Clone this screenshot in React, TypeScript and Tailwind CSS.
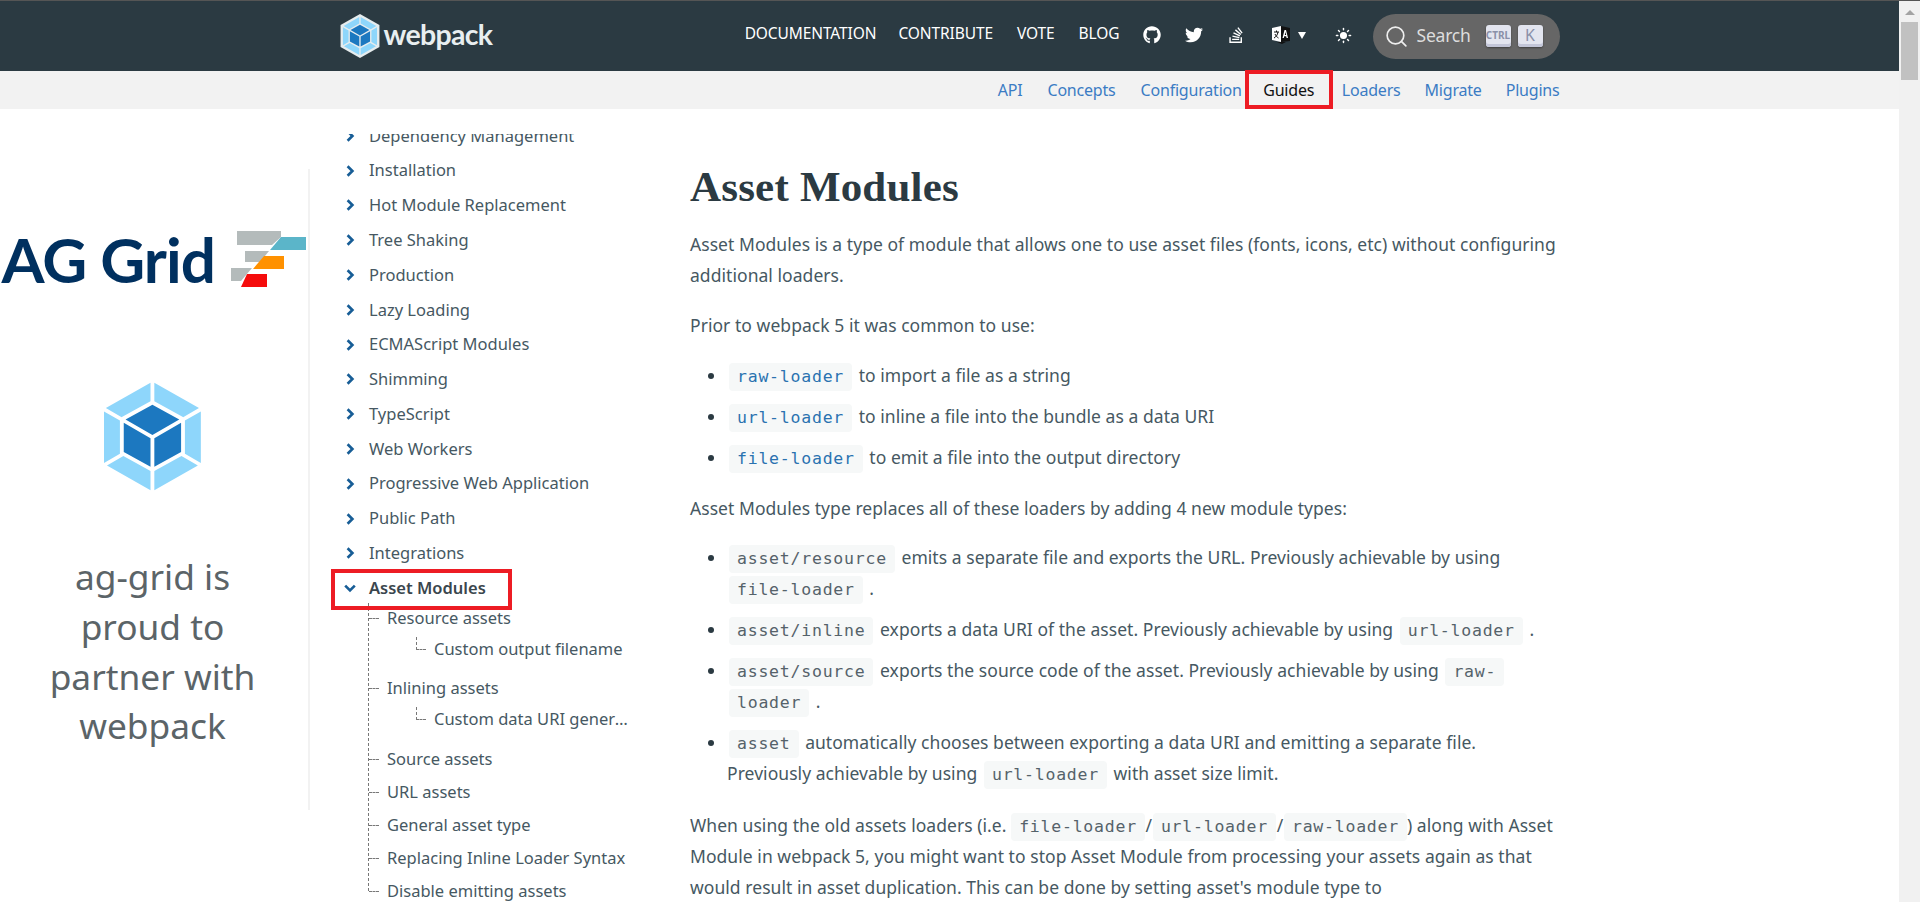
import React from "react";
import { FaGithub, FaTwitter, FaStackOverflow } from "react-icons/fa";
import { Search, Sun } from "lucide-react";

const topLinks = [
  { label: "DOCUMENTATION", cls: "mr-[22px]" },
  { label: "CONTRIBUTE", cls: "mr-[24px]" },
  { label: "VOTE", cls: "mr-[24px]" },
  { label: "BLOG", cls: "mr-[23px]" },
];

const subLinks = [
  { label: "API", cls: "" },
  { label: "Concepts", cls: "ml-[25px]" },
  { label: "Configuration", cls: "ml-[25px]" },
  { label: "Guides", cls: "" },
  { label: "Loaders", cls: "" },
  { label: "Migrate", cls: "ml-[24px]" },
  { label: "Plugins", cls: "ml-[24px]" },
];

const guides = [
  "Dependency Management",
  "Installation",
  "Hot Module Replacement",
  "Tree Shaking",
  "Production",
  "Lazy Loading",
  "ECMAScript Modules",
  "Shimming",
  "TypeScript",
  "Web Workers",
  "Progressive Web Application",
  "Public Path",
  "Integrations",
];

const WebpackCube = ({ className, outline }: { className: string; outline?: boolean }) => (
  <svg viewBox="0 0 600 600" className={className}>
    <path fill={outline ? "#e6ecee" : "#fff"} d="M300 .1L565 150v299.9L300 599.8 35 449.9V150z" />
    <path
      fill="#8ED6FB"
      d="M517.7 439.5L308.8 557.8v-92L439 394.1l78.7 45.4zm14.3-12.9V179.4l-76.4 44.1v159l76.4 44.1zM81.5 439.5l208.9 118.2v-92l-130.2-71.6-78.7 45.4zm-14.3-12.9V179.4l76.4 44.1v159l-76.4 44.1zm8.9-263.2L290.4 42.2v89l-137.3 75.5-1.1.6-75.9-43.9zm446.9 0L308.8 42.2v89L446 206.8l1.1.6 75.9-44z"
    />
    <path
      fill="#1C78C0"
      d="M290.4 444.8L162 374.1V234.2l128.4 74.1v136.5zm18.4 0l128.4-70.6v-140l-128.4 74.1v136.5zM299.6 303zm-129-85l129-70.9L428.5 218l-128.9 74.4-129-74.4z"
    />
  </svg>
);

const AgStripes = () => (
  <svg viewBox="229 228 76 57" className="w-[76px] h-[57px] shrink-0">
    <path fill="#b4bbbb" d="M235 228h44v6l-9 8h-35z" />
    <path fill="#5bb5c9" d="M279 234h25v13h-36z" />
    <path fill="#b4bbbb" d="M243 248h24l-9 11h-15z" />
    <path fill="#ff9100" d="M262 253h20v13h-31z" />
    <path fill="#b4bbbb" d="M229 265h21l-11 13h-10z" />
    <path fill="#f50c0c" d="M245 271h20v13h-26z" />
  </svg>
);

const LangIcon = () => (
  <svg viewBox="0 0 18 20" className="w-[18px] h-[20px]">
    <path fill="#fff" d="M0 3l9-2v16l-9-2z" />
    <path fill="#111" d="M9 1l9 2v13l-9 1z" />
    <path fill="#111" d="M5 17l5 2 4-2z" />
    <path stroke="#111" strokeWidth="1" fill="none" d="M2 7h5M4.500 5.500v1.500M6 7c-.500 3-2 5-4 6M3 9c.800 2 2 3 3.500 4" />
    <path fill="#fff" d="M12.500 5h1.500l2 8h-1.400l-.400-1.800h-2l-.400 1.800h-1.300zm.3 5.100h1.400l-.700-3z" />
  </svg>
);

const Key = ({ children, small }: { children: string; small?: boolean }) => (
  <span
    className={`flex items-center justify-center w-[25px] h-[22px] rounded-[3px] bg-[#e3e5ef] text-[#8a90a8] shadow-[inset_0_-3px_0_#c3c6d8,0_1px_2px_rgba(0,0,0,0.4)] pb-[2px] ${
      small ? "text-[10px] font-bold" : "text-[16px]"
    }`}
  >
    {children}
  </span>
);

const Chevron = ({ open }: { open?: boolean }) => (
  <svg viewBox="0 0 10 10" className="w-[12px] h-[12px] -ml-[1px] mr-[13px] shrink-0">
    {open ? (
      <path d="M1 3l4 4 4-4" fill="none" stroke="#175d96" strokeWidth="2.2" />
    ) : (
      <path d="M3 1l4 4-4 4" fill="none" stroke="#175d96" strokeWidth="2.2" />
    )}
  </svg>
);

const Tick = () => <span className="w-[10px] border-t border-dashed border-[#777] mr-[8px] shrink-0" />;

const SubItem = ({ label, cls }: { label: string; cls: string }) => (
  <li className={`flex items-center ${cls}`}>
    <Tick />
    {label}
  </li>
);

const SubSubItem = ({ label }: { label: string }) => (
  <li className="flex items-center h-[31px] ml-[47px]">
    <span className="w-[10px] h-[13px] self-start mt-[3px] border-l border-b border-dashed border-[#777] mr-[8px] shrink-0" />
    <span className="w-[196px] truncate">{label}</span>
  </li>
);

const Code = ({ children, blue, tight }: { children: string; blue?: boolean; tight?: boolean }) => (
  <code
    className={`inline-block h-[28px] leading-[28px] px-[8px] rounded-[4px] bg-[#f6f8f8] font-['DejaVu_Sans_Mono',monospace] text-[16.5px] tracking-[0.77px] ${
      tight ? "" : "mx-[2px]"
    } ${blue ? "text-[#2a72b0]" : "text-[#55626a]"}`}
  >
    {children}
  </code>
);

export default function App() {
  return (
    <div className="h-screen overflow-hidden flex flex-col bg-white font-['Noto_Sans',sans-serif] text-[#465862]">
      <div className="h-[1px] bg-[#555] shrink-0" />
      <div className="flex flex-1 min-h-0">
        <div className="flex-1 min-w-0 flex flex-col">
          <header className="h-[70px] shrink-0 bg-[#2b3a42]">
            <div className="w-[1220px] mx-auto h-full flex items-center justify-between">
              <div className="flex items-center">
                <WebpackCube className="w-[44px] h-[44px] -ml-[2px]" outline />
                <span className="ml-[2px] mb-[3px] font-['Lato',sans-serif] font-bold text-[28.5px] tracking-[-0.7px] text-[#e8eef0]">
                  webpack
                </span>
              </div>
              <div className="flex items-center text-white">
                <div className="flex items-center mb-[2px]">
                  {topLinks.map((l) => (
                    <a key={l.label} className={`text-[15.5px] tracking-[-0.1px] mb-[3px] ${l.cls}`}>
                      {l.label}
                    </a>
                  ))}
                  <FaGithub className="w-[18px] h-[18px] mr-[24px]" />
                  <FaTwitter className="w-[18px] h-[18px] mr-[24px]" />
                  <FaStackOverflow className="w-[18px] h-[18px] mr-[27px]" />
                  <LangIcon />
                  <span className="ml-[8px] mr-[29px] w-0 h-0 border-x-[4px] border-x-transparent border-t-[7px] border-t-white" />
                  <Sun className="w-[17px] h-[17px] mr-[21px]" fill="#fff" />
                </div>
                <div className="w-[187px] h-[45px] rounded-full bg-[#666] flex items-center pl-[11px]">
                  <Search className="w-[25px] h-[25px] text-[#eee]" strokeWidth={1.6} />
                  <span className="ml-[8px] w-[69px] mb-[1px] text-[#ddd] text-[17.5px] tracking-[-0.2px]">Search</span>
                  <Key small>CTRL</Key>
                  <span className="w-[7px]" />
                  <Key>K</Key>
                </div>
              </div>
            </div>
          </header>
          <nav className="h-[38px] shrink-0 bg-[#f2f2f2]">
            <div className="w-[1220px] mx-auto h-full flex items-center justify-end text-[16px] tracking-[-0.2px] text-[#3b7cc4]">
              {subLinks.map((s) =>
                s.label === "Guides" ? (
                  <a
                    key={s.label}
                    className="h-[39px] w-[88px] -mt-[1px] ml-[3px] mr-[9px] flex items-center justify-center border-[4px] border-[#ed1c24] text-[#111]"
                  >
                    {s.label}
                  </a>
                ) : (
                  <a key={s.label} className={`mb-[1px] ${s.cls}`}>
                    {s.label}
                  </a>
                )
              )}
            </div>
          </nav>
          <div className="flex flex-1 min-h-0">
            <aside className="w-[310px] shrink-0 h-[641px] mt-[60px] pr-[3px] border-r-2 border-[#f2f2f2] flex flex-col items-center pt-[55px]">
              <div className="flex items-center justify-between w-[305px] -mr-[3px]">
                <span className="font-['Lato',sans-serif] font-bold text-[62px] leading-[70px] tracking-[-1px] text-[#00305f] whitespace-nowrap">
                  AG Grid
                </span>
                <AgStripes />
              </div>
              <WebpackCube className="w-[125px] h-[125px] mt-[80px]" />
              <p className="mt-[53px] text-center text-[35.3px] leading-[49.8px] w-[240px] text-[#5b6468]">
                ag-grid is
                <br />
                proud to
                <br />
                partner with
                <br />
                webpack
              </p>
            </aside>
            <div className="w-[380px] shrink-0 mt-[25px] overflow-hidden pl-[35px] text-[16.5px]">
              <ul className="-mt-[15.5px]">
                {guides.map((g) => (
                  <li key={g} className="h-[34.8px] flex items-center">
                    <Chevron />
                    {g}
                  </li>
                ))}
                <li className="relative z-10 h-[34.8px] flex items-center font-semibold text-[#3a464d]">
                  <Chevron open />
                  Asset Modules
                  <span className="absolute left-[-14px] top-[-2px] w-[181px] h-[41px] border-[4px] border-[#ed1c24]" />
                </li>
              </ul>
              <ul className="ml-[23px] -mt-[3px] h-[288px] border-l border-dashed border-[#777]">
                <SubItem label="Resource assets" cls="h-[31px]" />
                <SubSubItem label="Custom output filename" />
                <li className="h-[8px]" />
                <SubItem label="Inlining assets" cls="h-[31px]" />
                <SubSubItem label="Custom data URI generator content" />
                <li className="h-[8px]" />
                <SubItem label="Source assets" cls="h-[33px]" />
                <SubItem label="URL assets" cls="h-[33px]" />
                <SubItem label="General asset type" cls="h-[33px]" />
                <SubItem label="Replacing Inline Loader Syntax" cls="h-[33px]" />
                <SubItem label="Disable emitting assets" cls="h-[33px]" />
              </ul>
            </div>
            <main className="flex-1 min-w-0 pt-[47px] text-[17.5px] leading-[31px] tracking-[0.05px] whitespace-nowrap">
              <h1 className="font-['Liberation_Serif',serif] font-bold text-[43px] leading-[62px] tracking-[0.2px] text-[#2b3a42]">
                Asset Modules
              </h1>
              <p className="mt-[11px]">
                Asset Modules is a type of module that allows one to use asset files (fonts, icons, etc) without configuring
                <br />
                additional loaders.
              </p>
              <p className="mt-[19px]">Prior to webpack 5 it was common to use:</p>
              <ul className="mt-[19px] list-disc pl-[37px] marker:text-[#2b3a42]">
                <li className="h-[41px]">
                  <Code blue>raw-loader</Code> to import a file as a string
                </li>
                <li className="h-[41px]">
                  <Code blue>url-loader</Code> to inline a file into the bundle as a data URI
                </li>
                <li className="h-[41px]">
                  <Code blue>file-loader</Code> to emit a file into the output directory
                </li>
              </ul>
              <p className="mt-[10px]">Asset Modules type replaces all of these loaders by adding 4 new module types:</p>
              <ul className="mt-[18px] list-disc pl-[37px] marker:text-[#2b3a42]">
                <li className="h-[72px]">
                  <Code>asset/resource</Code> emits a separate file and exports the URL. Previously achievable by using
                  <br />
                  <Code>file-loader</Code> .
                </li>
                <li className="h-[41px]">
                  <Code>asset/inline</Code> exports a data URI of the asset. Previously achievable by using <Code>url-loader</Code> .
                </li>
                <li className="h-[72px]">
                  <Code>asset/source</Code> exports the source code of the asset. Previously achievable by using <Code>raw-</Code>
                  <br />
                  <Code>loader</Code> .
                </li>
                <li className="h-[72px]">
                  <Code>asset</Code> automatically chooses between exporting a data URI and emitting a separate file.
                  <br />
                  Previously achievable by using <Code>url-loader</Code> with asset size limit.
                </li>
              </ul>
              <p className="mt-[11px]">
                When using the old assets loaders (i.e. <Code tight>file-loader</Code>
                <span className="inline-block w-[8px] text-center">/</span>
                <Code tight>url-loader</Code>
                <span className="inline-block w-[8px] text-center">/</span>
                <Code tight>raw-loader</Code>) along with Asset
                <br />
                Module in webpack 5, you might want to stop Asset Module from processing your assets again as that
                <br />
                would result in asset duplication. This can be done by setting asset's module type to
                <br />
                <span className="align-[3px]">
                  <Code tight>'javascript/auto'</Code>
                </span>
              </p>
            </main>
          </div>
        </div>
        <div className="w-[21px] shrink-0 bg-[#f1f1f1] flex flex-col items-center">
          <span className="mt-[9px] w-0 h-0 border-x-[5px] border-x-transparent border-b-[5px] border-b-[#a3a3a3]" />
          <span className="mt-[7px] w-[17px] h-[58px] bg-[#c1c1c1]" />
        </div>
      </div>
    </div>
  );
}
